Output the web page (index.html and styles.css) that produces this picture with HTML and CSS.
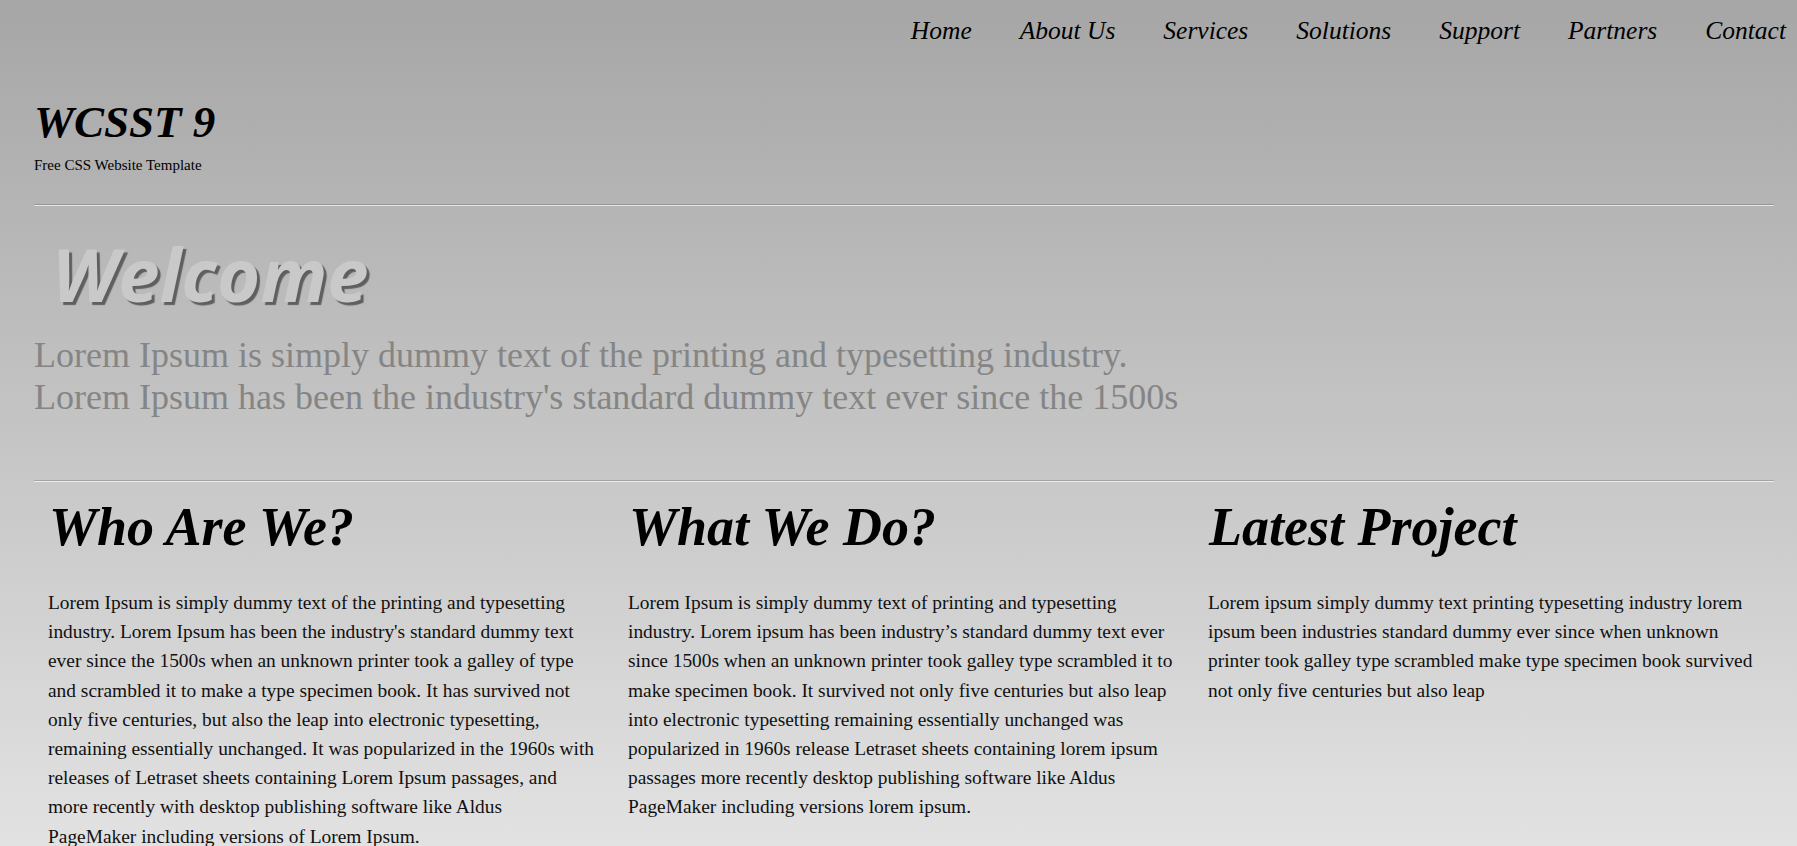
FILE: index.html
```html
<!DOCTYPE html>
<html lang="en">
<head>
<meta charset="utf-8">
<title>WCSST 9</title>
<link rel="stylesheet" href="styles.css">
</head>
<body>
<header class="top">
  <nav class="menu">
    <a href="#">Home</a>
    <a href="#">About Us</a>
    <a href="#">Services</a>
    <a href="#">Solutions</a>
    <a href="#">Support</a>
    <a href="#">Partners</a>
    <a href="#">Contact</a>
  </nav>
</header>
<div class="wrap">
  <div class="brand">
    <h1 class="logo">WCSST 9</h1>
    <p class="tagline">Free CSS Website Template</p>
  </div>
  <hr class="rule">
  <section class="hero">
    <h2 class="welcome">Welcome</h2>
    <p class="intro">Lorem Ipsum is simply dummy text of the printing and typesetting industry.<br>Lorem Ipsum has been the industry's standard dummy text ever since the 1500s</p>
  </section>
  <hr class="rule rule-2">
  <section class="cols">
    <div class="col">
      <h3 class="col-title">Who Are We?</h3>
      <p class="col-text">Lorem Ipsum is simply dummy text of the printing and typesetting industry. Lorem Ipsum has been the industry's standard dummy text ever since the 1500s when an unknown printer took a galley of type and scrambled it to make a type specimen book. It has survived not only five centuries, but also the leap into electronic typesetting, remaining essentially unchanged. It was popularized in the 1960s with releases of Letraset sheets containing Lorem Ipsum passages, and more recently with desktop publishing software like Aldus<br>PageMaker including versions of Lorem Ipsum.</p>
    </div>
    <div class="col">
      <h3 class="col-title">What We Do?</h3>
      <p class="col-text">Lorem Ipsum is simply dummy text of printing and typesetting industry. Lorem ipsum has been industry’s standard dummy text ever since 1500s when an unknown printer took galley type scrambled it to make specimen book. It survived not only five centuries but also leap into electronic typesetting remaining essentially unchanged was popularized in 1960s release Letraset sheets containing lorem ipsum passages more recently desktop publishing software like Aldus PageMaker including versions lorem ipsum.</p>
    </div>
    <div class="col">
      <h3 class="col-title">Latest Project</h3>
      <p class="col-text">Lorem ipsum simply dummy text printing typesetting industry lorem ipsum been industries standard dummy ever since when unknown printer took galley type scrambled make type specimen book survived not only five centuries but also leap</p>
    </div>
  </section>
</div>
</body>
</html>
```
FILE: styles.css
```css
html, body {
  margin: 0;
  padding: 0;
}
body {
  min-height: 846px;
  background: linear-gradient(to bottom, #a6a6a6 0px, #e2e2e2 846px);
  font-family: "Liberation Serif", "Times New Roman", serif;
  color: #000;
  overflow: hidden;
}
.top {
  display: flex;
  justify-content: flex-end;
  padding: 16px 11px 0 0;
}
.menu {
  display: flex;
  gap: 48px;
}
.menu a {
  font-style: italic;
  font-size: 25.5px;
  line-height: 30px;
  color: #000;
  text-decoration: none;
}
.wrap {
  padding: 0 23px 0 34px;
}
.brand {
  padding-top: 48px;
}
.logo {
  margin: 0;
  font-size: 45px;
  line-height: 56px;
  font-style: italic;
  font-weight: bold;
}
.tagline {
  margin: 6px 0 0;
  font-size: 15px;
  line-height: 18px;
}
.rule {
  margin: 30px 0 0;
  height: 0;
  border: 0;
  border-top: 1px solid #979797;
  border-bottom: 1px solid #e6e6e6;
}
.welcome {
  margin: 24px 0 0;
  padding-left: 18px;
  font-family: "Open Sans", "DejaVu Sans", sans-serif;
  font-size: 74px;
  line-height: 88px;
  font-style: italic;
  font-weight: 700;
  color: #c9c9c9;
  text-shadow: 3px 3px 1px #5f5f5f;
}
.intro {
  margin: 17px 0 0;
  font-size: 36px;
  line-height: 41.5px;
  color: #858585;
}
.rule-2 {
  margin-top: 62px;
  border-top-color: #a4a4a4;
  border-bottom-color: #ececec;
}
.cols {
  display: grid;
  grid-template-columns: repeat(3, 1fr);
}
.col {
  padding: 0 14px;
}
.col-title {
  margin: 14px 0 0;
  padding-left: 1px;
  font-size: 54px;
  line-height: 62px;
  font-style: italic;
  font-weight: bold;
}
.col-text {
  margin: 30px 0 0;
  font-size: 19.4px;
  line-height: 29.2px;
  color: #111;
}
```
